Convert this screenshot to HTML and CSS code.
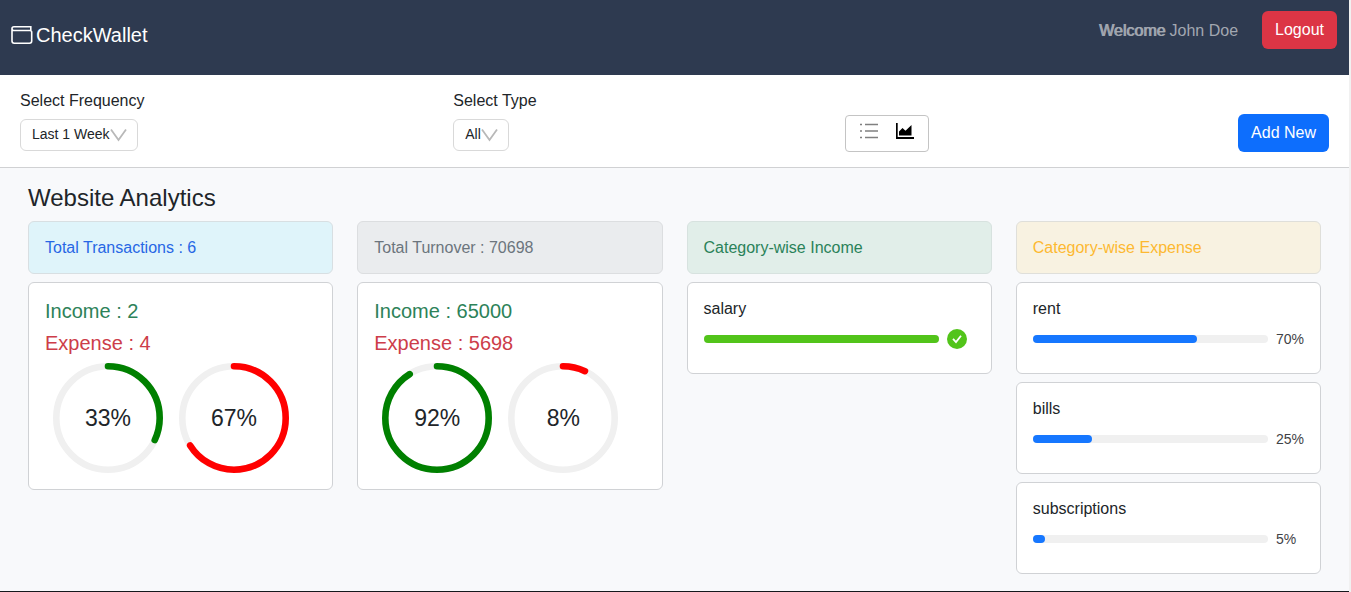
FILE: index.html
```html
<!DOCTYPE html>
<html lang="en">
<head>
<meta charset="utf-8">
<meta name="viewport" content="width=device-width, initial-scale=1">
<title>CheckWallet</title>
<link rel="stylesheet" href="styles.css">
</head>
<body>
<div class="page">
  <header class="header">
    <a class="brand" href="#">
      <svg class="brand-icon" viewBox="0 0 22 20" aria-hidden="true"><path d="M19.800 5V1.800H3Q1 1.800 1 3.500V16q0 2.200 2.200 2.200H18.500q2.200 0 2.200-2.200V7.300q0-1.800-1.700-1.800H3Q1 5.500 1 3.500" fill="none" stroke="currentColor" stroke-width="1.600"/></svg>
      <span>CheckWallet</span>
    </a>
    <div class="account">
      <p class="welcome"><span class="welcome-word">Welcome</span> John Doe</p>
      <button class="btn btn-danger" type="button">Logout</button>
    </div>
  </header>

  <section class="toolbar">
    <div class="field">
      <label for="frequency">Select Frequency</label>
      <div class="select">
        <select id="frequency"><option>Last 1 Week</option><option>Last 1 Month</option><option>Last 1 Year</option></select>
        <svg class="chevron" viewBox="0 0 17 14" aria-hidden="true"><path d="M1 1.500 8.500 12 16 1.500"/></svg>
      </div>
    </div>
    <div class="field">
      <label for="type">Select Type</label>
      <div class="select">
        <select id="type"><option>All</option><option>Income</option><option>Expense</option></select>
        <svg class="chevron" viewBox="0 0 17 14" aria-hidden="true"><path d="M1 1.500 8.500 12 16 1.500"/></svg>
      </div>
    </div>
    <div class="switch">
      <button class="switch-btn" type="button" aria-label="List view">
        <svg viewBox="0 0 20 20" aria-hidden="true"><path d="M6 3.500h13M6 10h13M6 16.500h13M1 3.500h2M1 10h2M1 16.500h2" stroke="currentColor" stroke-width="1.600"/></svg>
      </button>
      <button class="switch-btn active" type="button" aria-label="Chart view">
        <svg viewBox="0 0 20 20" aria-hidden="true"><path d="M1 2h1.700v14H19v2H1z"/><path d="M4 14.500v-4L7.500 7l3 2.800L16.500 4v10.500z"/></svg>
      </button>
    </div>
    <button class="btn btn-primary" type="button">Add New</button>
  </section>

  <main class="analytics">
    <h1>Website Analytics</h1>
    <div class="columns">
      <section class="column">
        <h2 class="card heading info">Total Transactions : 6</h2>
        <div class="card summary">
          <p class="income">Income : 2</p>
          <p class="expense">Expense : 4</p>
          <div class="rings">
            <div class="ring"><svg viewBox="0 0 100 100" aria-hidden="true"><circle cx="50" cy="50" r="47"/><circle class="arc green" cx="50" cy="50" r="47" stroke-dasharray="94.500 296"/></svg><span>33%</span></div>
            <div class="ring"><svg viewBox="0 0 100 100" aria-hidden="true"><circle cx="50" cy="50" r="47"/><circle class="arc red" cx="50" cy="50" r="47" stroke-dasharray="194.900 296"/></svg><span>67%</span></div>
          </div>
        </div>
      </section>
      <section class="column">
        <h2 class="card heading neutral">Total Turnover : 70698</h2>
        <div class="card summary">
          <p class="income">Income : 65000</p>
          <p class="expense">Expense : 5698</p>
          <div class="rings">
            <div class="ring"><svg viewBox="0 0 100 100" aria-hidden="true"><circle cx="50" cy="50" r="47"/><circle class="arc green" cx="50" cy="50" r="47" stroke-dasharray="268.700 296"/></svg><span>92%</span></div>
            <div class="ring"><svg viewBox="0 0 100 100" aria-hidden="true"><circle cx="50" cy="50" r="47"/><circle class="arc red" cx="50" cy="50" r="47" stroke-dasharray="20.600 296"/></svg><span>8%</span></div>
          </div>
        </div>
      </section>
      <section class="column">
        <h2 class="card heading success">Category-wise Income</h2>
        <div class="card category">
          <h3>salary</h3>
          <div class="progress"><div class="track"><div class="fill complete" style="width:100%"></div></div>
            <span class="value"><svg class="check" viewBox="0 0 20 20" role="img" aria-label="Complete"><circle cx="10" cy="10" r="10"/><path d="M6 9.800 9 13l5-6.300"/></svg></span></div>
        </div>
      </section>
      <section class="column">
        <h2 class="card heading warning">Category-wise Expense</h2>
        <div class="card category">
          <h3>rent</h3>
          <div class="progress"><div class="track"><div class="fill" style="width:70%"></div></div><span class="value">70%</span></div>
        </div>
        <div class="card category">
          <h3>bills</h3>
          <div class="progress"><div class="track"><div class="fill" style="width:25%"></div></div><span class="value">25%</span></div>
        </div>
        <div class="card category">
          <h3>subscriptions</h3>
          <div class="progress"><div class="track"><div class="fill" style="width:5%"></div></div><span class="value">5%</span></div>
        </div>
      </section>
    </div>
  </main>
</div>
</body>
</html>
```

FILE: styles.css
```css
*, *::before, *::after { box-sizing: border-box; }

body {
  margin: 0;
  background: #f1f1f1;
  color: #212529;
  font: 16px/20px "Liberation Sans", Arial, sans-serif;
}

h1, h2, h3, p { margin: 0; font-weight: 400; }
button, select { font: inherit; }
svg { display: block; }

.page {
  display: flex;
  flex-direction: column;
  min-height: 100vh;
  margin-right: 2px;
  background: #f8f9fb;
  border-bottom: 1px solid #15181c;
}

.header {
  display: flex;
  justify-content: space-between;
  align-items: flex-start;
  padding: 11px 12px 26px 11px;
  background: #2e3a50;
}

.brand {
  display: flex;
  align-items: center;
  gap: 3px;
  padding-top: 12px;
  color: #fff;
  font-size: 20px;
  line-height: 24px;
  text-decoration: none;
}
.brand-icon { width: 22px; height: 20px; }

.account { display: flex; align-items: center; gap: 24px; }
.welcome { padding-top: 2px; color: #a2a7b0; }
.welcome-word { text-shadow: 1px 0 currentColor; }

.btn {
  height: 38px;
  padding: 0 13px;
  border: 0;
  border-radius: 6px;
  color: #fff;
}
.btn-danger { background: #dc3545; }
.btn-primary { background: #0d6efd; }

.toolbar {
  display: flex;
  justify-content: space-between;
  align-items: flex-end;
  padding: 16px 20px 15px;
  background: #fff;
  border-bottom: 1px solid #d0d1d3;
}

.field {
  display: flex;
  flex-direction: column;
  align-items: flex-start;
  gap: 8px;
  padding-bottom: 1px;
}

.select { position: relative; }
.select select {
  field-sizing: content;
  display: block;
  height: 32px;
  padding: 0 27px 2px 11px;
  appearance: none;
  background: #fff;
  border: 1px solid #d9d9d9;
  border-radius: 6px;
  color: #212529;
  font-size: 14px;
}
.chevron {
  position: absolute;
  top: 9px;
  right: 11px;
  width: 17px;
  height: 14px;
  fill: none;
  stroke: #b8b8b8;
  stroke-width: 1.8;
  pointer-events: none;
}

.switch {
  display: flex;
  gap: 16px;
  padding: 5px 13px 10px;
  border: 1px solid #c4c4c4;
  border-radius: 4px;
}
.switch-btn { padding: 0; border: 0; background: none; color: #808080; }
.switch-btn svg { width: 20px; height: 20px; }
.active { color: #000; }
.active svg { fill: currentColor; }

.analytics { padding: 15px 28px; }
.analytics h1 { margin-bottom: 9px; font-size: 24px; line-height: 29px; }

.columns {
  display: grid;
  grid-template-columns: repeat(4, 1fr);
  gap: 24px;
  align-items: start;
}
.column { display: grid; gap: 8px; }

.card {
  padding: 16px;
  background: #fff;
  border: 1px solid #d0d2d5;
  border-radius: 6px;
}

.heading { padding-bottom: 15px; font-size: 16px; border-color: #d8dfe2; }
.info { background: #dff4fa; color: #2767e5; }
.neutral { background: #eaecee; color: #6c757d; border-color: #dcdee0; }
.success { background: #e1eee9; color: #2a8259; border-color: #d7e2df; }
.warning { background: #f8f2e1; color: #fdb931; border-color: #dfdfda; }

.summary { display: grid; gap: 8px; font-size: 20px; line-height: 24px; }
.income { color: #2d8259; }
.expense { color: #cd3d49; }

.rings { display: flex; gap: 16px; padding-left: 8px; }
.ring { display: grid; place-items: center; width: 110px; height: 110px; font-size: 23px; }
.ring > * { grid-area: 1 / 1; }
.ring svg { width: 110px; height: 110px; }
.ring circle { fill: none; stroke: #f0f0f0; stroke-width: 6; }
.ring .arc { stroke-linecap: round; transform: rotate(-90deg); transform-origin: center; }
.ring .green { stroke: #008000; }
.ring .red { stroke: #f00; }

.category { display: grid; gap: 8px; padding-bottom: 22px; }
.category h3 { font-size: 16px; }
.progress { display: flex; align-items: center; gap: 8px; height: 24px; }
.track { flex: 1; height: 8px; border-radius: 4px; background: #f0f0f0; }
.fill { height: 8px; border-radius: 4px; background: #1677ff; }
.complete { background: #52c41a; }
.value { width: 28px; color: #3f4246; font-size: 14px; }
.check { width: 20px; height: 20px; fill: #52c41a; }
.check path { fill: none; stroke: #fff; stroke-width: 1.8; }
```
